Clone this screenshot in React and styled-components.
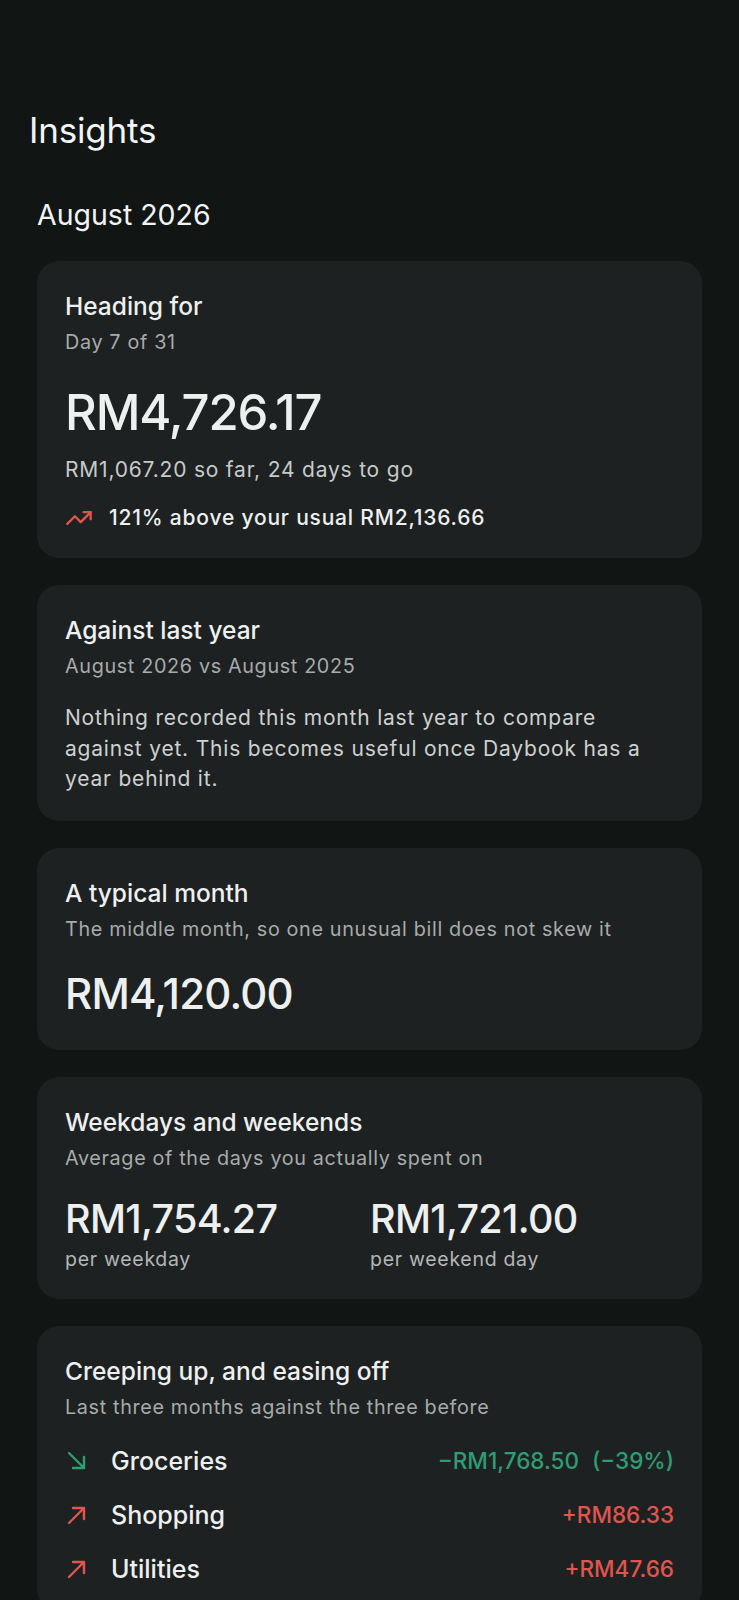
import React from "react";
import styled, { createGlobalStyle } from "styled-components";
import { TrendingUp } from "lucide-react";

const GREEN = "#2f9d72";
const RED = "#e0554f";

const GlobalStyle = createGlobalStyle`
  body {
    margin: 0;
    background: #111514;
    font-family: Inter, "Noto Sans", sans-serif;
    color: #eceeee;
  }
`;

const changes = [
  { name: "Groceries", amount: "−RM1,768.50", pct: "(−39%)", down: true },
  { name: "Shopping", amount: "+RM86.33" },
  { name: "Utilities", amount: "+RM47.66" },
];

// thin diagonal arrow, head in the corner it points to
const Arrow = ({ down }) => (
  <ArrowSvg viewBox="0 0 24 24" fill="none" stroke={down ? GREEN : RED}>
    {down ? (
      <path d="M4 4 L19 19 M19 8 V19 H8" />
    ) : (
      <path d="M4 20 L19 5 M8 5 H19 V16" />
    )}
  </ArrowSvg>
);

const App = () => {
  return (
    <Page>
      <GlobalStyle />
      <Title>Insights</Title>
      <Month>August 2026</Month>
      <Cards>
        <Card>
          <CardTitle>Heading for</CardTitle>
          <CardSub>Day 7 of 31</CardSub>
          <BigAmount>RM4,726.17</BigAmount>
          <Note>RM1,067.20 so far, 24 days to go</Note>
          <Trend>
            <TrendingUp size={28} color={RED} strokeWidth={2} />
            <span>121% above your usual RM2,136.66</span>
          </Trend>
        </Card>

        <Card>
          <CardTitle>Against last year</CardTitle>
          <CardSub>August 2026 vs August 2025</CardSub>
          <Paragraph>
            Nothing recorded this month last year to compare against yet. This
            becomes useful once Daybook has a year behind it.
          </Paragraph>
        </Card>

        <Card>
          <CardTitle>A typical month</CardTitle>
          <CardSub>The middle month, so one unusual bill does not skew it</CardSub>
          <MidAmount>RM4,120.00</MidAmount>
        </Card>

        <Card>
          <CardTitle>Weekdays and weekends</CardTitle>
          <CardSub>Average of the days you actually spent on</CardSub>
          <Split>
            <div>
              <SplitAmount>RM1,754.27</SplitAmount>
              <SplitLabel>per weekday</SplitLabel>
            </div>
            <div>
              <SplitAmount>RM1,721.00</SplitAmount>
              <SplitLabel>per weekend day</SplitLabel>
            </div>
          </Split>
        </Card>

        <Card>
          <CardTitle>Creeping up, and easing off</CardTitle>
          <CardSub>Last three months against the three before</CardSub>
          <Rows>
            {changes.map((c) => (
              <Row key={c.name}>
                <Arrow down={c.down} />
                <RowName>{c.name}</RowName>
                <RowAmount $down={c.down}>
                  {c.amount}
                  {c.pct && <Pct>{c.pct}</Pct>}
                </RowAmount>
              </Row>
            ))}
          </Rows>
        </Card>
      </Cards>
    </Page>
  );
};

export default App;

const Page = styled.div`
  padding: 106px 37px 40px;
`;

const Title = styled.h1`
  margin: 0 0 0 -8px;
  font-size: 35px;
  font-weight: 400;
  line-height: 48px;
  letter-spacing: -0.2px;
  color: #f2f4f4;
`;

const Month = styled.h2`
  margin: 44px 0 0 0;
  font-size: 28.5px;
  font-weight: 400;
  line-height: 34px;
  color: #f2f4f4;
`;

const Cards = styled.div`
  margin-top: 29px;
  display: flex;
  flex-direction: column;
  gap: 27px;
`;

const Card = styled.section`
  background: #1e2121;
  border-radius: 22px;
  padding: 30px 28px 26px;
`;

const CardTitle = styled.div`
  font-size: 24.5px;
  font-weight: 500;
  line-height: 30px;
  color: #eef0f0;
`;

const CardSub = styled.div`
  margin-top: 8px;
  font-size: 19.8px;
  line-height: 26px;
  letter-spacing: 0.65px;
  color: #a7abab;
`;

const BigAmount = styled.div`
  margin-top: 29px;
  font-size: 49px;
  font-weight: 500;
  line-height: 58px;
  letter-spacing: -1.1px;
  color: #eef0f0;
`;

const Note = styled.div`
  margin-top: 14px;
  font-size: 21px;
  line-height: 28px;
  letter-spacing: 0.8px;
  color: #c6caca;
`;

const Trend = styled.div`
  margin-top: 20px;
  display: flex;
  align-items: center;
  gap: 16px;
  font-size: 21px;
  font-weight: 500;
  line-height: 28px;
  letter-spacing: 0.8px;
  color: #eef0f0;
`;

const Paragraph = styled.p`
  margin: 24px 0 0;
  font-size: 21px;
  line-height: 30.6px;
  letter-spacing: 0.8px;
  color: #cdd0d0;
`;

const MidAmount = styled.div`
  margin-top: 22px;
  font-size: 42px;
  font-weight: 500;
  line-height: 60px;
  letter-spacing: -0.8px;
  color: #eef0f0;
`;

const Split = styled.div`
  margin-top: 24px;
  display: grid;
  grid-template-columns: 305px 1fr;
`;

const SplitAmount = styled.div`
  font-size: 39.5px;
  font-weight: 500;
  line-height: 48px;
  letter-spacing: -0.7px;
  color: #eef0f0;
`;

const SplitLabel = styled.div`
  margin-top: 2px;
  font-size: 19.5px;
  line-height: 28px;
  letter-spacing: 0.7px;
  color: #b3b7b7;
`;

const Rows = styled.div`
  margin-top: 25px;
  display: flex;
  flex-direction: column;
  gap: 22px;
`;

const Row = styled.div`
  display: flex;
  align-items: center;
  gap: 22px;
  height: 32px;
`;

const ArrowSvg = styled.svg`
  width: 24px;
  height: 24px;
  flex-shrink: 0;
  stroke-width: 2.4;
  stroke-linecap: round;
  stroke-linejoin: round;
`;

const RowName = styled.span`
  flex: 1;
  font-size: 25px;
  font-weight: 500;
  color: #eef0f0;
`;

const RowAmount = styled.span`
  font-size: 22.5px;
  font-weight: 500;
  color: ${(p) => (p.$down ? GREEN : RED)};
`;

const Pct = styled.span`
  margin-left: 13px;
`;
